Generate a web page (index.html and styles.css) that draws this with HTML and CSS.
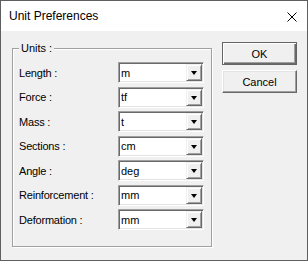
FILE: index.html
```html
<!DOCTYPE html>
<html lang="en">
<head>
  <meta charset="UTF-8">
  <title>Unit Preferences</title>
  <link rel="stylesheet" href="styles.css">
</head>
<body>
  <div class="window">
    <div class="titlebar">
      <span class="title">Unit Preferences</span>
      <svg class="close" width="10" height="10" viewBox="0 0 10 10">
        <path d="M0.5 0.5 L9.5 9.5 M9.5 0.5 L0.5 9.5" stroke="#000" stroke-width="1" fill="none"/>
      </svg>
    </div>

    <div class="client">
      <!-- Units group -->
      <div class="group">
        <div class="legend">Units :</div>
        <div class="rows">
          <div class="row">
            <span class="label">Length :</span>
            <div class="combo"><span class="value">m</span><span class="drop"><i class="arrow"></i></span></div>
          </div>
          <div class="row">
            <span class="label">Force :</span>
            <div class="combo"><span class="value">tf</span><span class="drop"><i class="arrow"></i></span></div>
          </div>
          <div class="row">
            <span class="label">Mass :</span>
            <div class="combo"><span class="value">t</span><span class="drop"><i class="arrow"></i></span></div>
          </div>
          <div class="row">
            <span class="label">Sections :</span>
            <div class="combo"><span class="value">cm</span><span class="drop"><i class="arrow"></i></span></div>
          </div>
          <div class="row">
            <span class="label">Angle :</span>
            <div class="combo"><span class="value">deg</span><span class="drop"><i class="arrow"></i></span></div>
          </div>
          <div class="row">
            <span class="label">Reinforcement :</span>
            <div class="combo"><span class="value">mm</span><span class="drop"><i class="arrow"></i></span></div>
          </div>
          <div class="row">
            <span class="label">Deformation :</span>
            <div class="combo"><span class="value">mm</span><span class="drop"><i class="arrow"></i></span></div>
          </div>
        </div>
      </div>

      <div class="buttons">
        <button class="btn default">OK</button>
        <button class="btn">Cancel</button>
      </div>
    </div>
  </div>
</body>
</html>
```

FILE: styles.css
```css
html, body {
  margin: 0;
}
body {
  font-family: "Liberation Sans", Arial, sans-serif;
  font-size: 11px;
  color: #000;
  background: #f0f0f0;
}
.window {
  width: 308px;
  height: 261px;
  box-sizing: border-box;
  border: 1px solid #5f5f5f;
  background: #f0f0f0;
  display: flex;
  flex-direction: column;
}
.titlebar {
  height: 30px;
  flex: none;
  background: #fff;
  display: flex;
  align-items: center;
  justify-content: space-between;
  padding: 0 10px 0 8px;
}
.title {
  font-size: 12px;
}
.close {
  display: block;
  margin-top: 1px;
}
.client {
  flex: 1;
  display: flex;
  align-items: flex-start;
  padding: 11px 0 0 11px;
}
/* group box with etched frame */
.group {
  margin-top: 6px;
  width: 200px;
  box-sizing: border-box;
  border: 1px solid #a0a0a0;
  box-shadow: inset 1px 1px #fff, 1px 1px #fff;
  padding: 0 7px 16px 6px;
}
.legend {
  width: fit-content;
  margin-top: -7px;
  padding: 0 2px;
  line-height: 13px;
  background: #f0f0f0;
}
.rows {
  margin-top: 7px;
  display: flex;
  flex-direction: column;
  gap: 3.5px;
}
.row {
  display: flex;
  align-items: center;
  height: 21px;
}
.label {
  width: 99px;
  letter-spacing: -0.2px;
}
.combo {
  width: 86px;
  height: 21px;
  box-sizing: border-box;
  border: 1px solid;
  border-color: #a0a0a0 #fff #fff #a0a0a0;
  box-shadow: inset 1px 1px #696969, inset -1px -1px #e3e3e3;
  background: #fff;
  display: flex;
  align-items: center;
}
.value {
  flex: 1;
  padding-left: 2px;
}
.drop {
  align-self: stretch;
  width: 16px;
  margin: 1px 1px 1px 0;
  box-sizing: border-box;
  border: 1px solid;
  border-color: #f0f0f0 #696969 #696969 #f0f0f0;
  box-shadow: inset 1px 1px #fff, inset -1px -1px #a0a0a0;
  background: #f0f0f0;
  display: flex;
  align-items: center;
  justify-content: center;
}
.arrow {
  width: 0;
  height: 0;
  border-left: 3.5px solid transparent;
  border-right: 3.5px solid transparent;
  border-top: 4px solid #000;
  margin-top: 1px;
}
.buttons {
  margin-left: 10px;
  display: flex;
  flex-direction: column;
  gap: 5px;
}
.btn {
  width: 75px;
  height: 23px;
  padding: 0;
  font-family: inherit;
  font-size: 11px;
  color: #000;
  background: #f0f0f0;
  border: 1px solid;
  border-color: #fff #696969 #696969 #fff;
  box-shadow: inset -1px -1px #a0a0a0, inset 1px 1px #e3e3e3;
}
.btn.default {
  border: 1px solid #646464;
  box-shadow: inset 1px 1px #fff, inset -1px -1px #696969, inset -2px -2px #a0a0a0;
}
```
